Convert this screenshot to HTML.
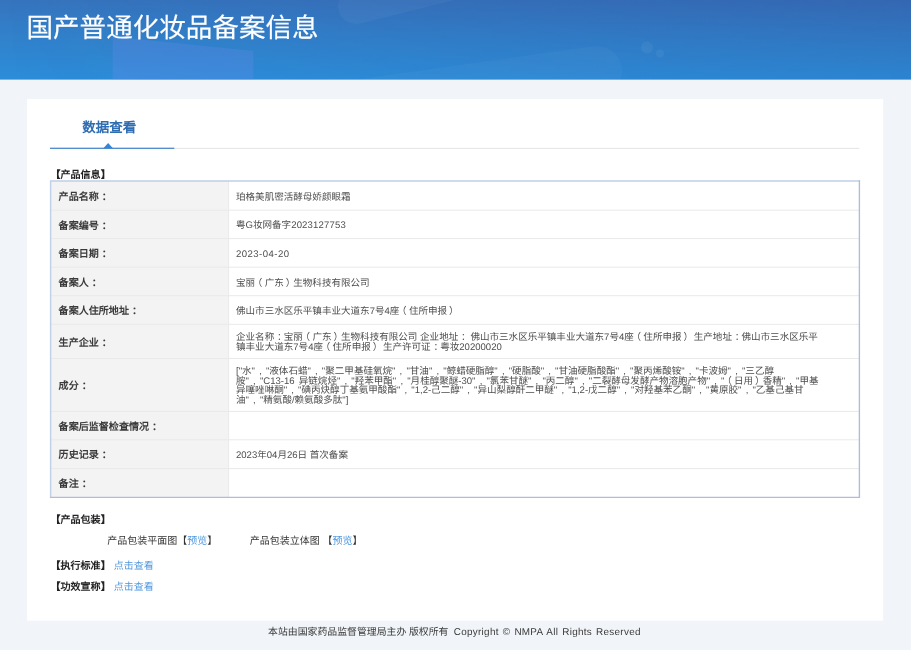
<!DOCTYPE html>
<html lang="zh-CN">
<head>
<meta charset="utf-8">
<title>国产普通化妆品备案信息</title>
<style>
html,body{margin:0;padding:0;}
body{width:911px;height:650px;overflow:hidden;background:#f1f4f8;position:relative;
  font-family:"Liberation Sans",sans-serif;color:#333;text-rendering:geometricPrecision;}
#bg{position:absolute;left:0;top:0;width:911px;height:650px;display:block;}
#tx{position:absolute;left:0;top:0;width:911px;height:650px;will-change:transform;}
.t{position:absolute;white-space:nowrap;line-height:1;margin:0;padding:0;}
.title{left:26.5px;top:15px;font-size:26.55px;color:#fff;line-height:27px;-webkit-text-stroke:0.15px #fff;}
.tab{left:82.3px;top:120.5px;font-size:13.5px;font-weight:bold;color:#2f6db3;line-height:14px;}
.sec{font-size:10.05px;font-weight:bold;color:#222;left:50.4px;line-height:10px;}
.lab{font-size:10.05px;font-weight:bold;color:#3a3a3a;left:58.6px;line-height:10px;}
.val{font-size:9.55px;color:#4d4d4d;left:236px;line-height:9.52px;}

.pk{font-size:10px;color:#333;line-height:10px;}
.foot{font-size:9.9px;color:#3a3a3a;line-height:10px;top:628px;}
.lnk{color:#4f96dc;}
.c{position:relative;left:0.3em;}
.pl{position:relative;left:-0.24em;}
.pr{position:relative;left:0.2em;}
</style>
</head>
<body>
<svg id="bg" width="911" height="650" viewBox="0 0 911 650">
  <defs>
    <linearGradient id="hg" x1="0" y1="0" x2="0" y2="1">
      <stop offset="0" stop-color="#3674be"/>
      <stop offset="0.5" stop-color="#3182cc"/>
      <stop offset="1" stop-color="#2c8dd9"/>
    </linearGradient>
    <linearGradient id="hx" x1="0" y1="0" x2="1" y2="0">
      <stop offset="0" stop-color="#2d3282" stop-opacity="0"/>
      <stop offset="1" stop-color="#2d3282" stop-opacity="1"/>
    </linearGradient>
    <linearGradient id="hm" x1="0" y1="0" x2="0" y2="1">
      <stop offset="0" stop-color="#fff" stop-opacity="0.19"/>
      <stop offset="1" stop-color="#fff" stop-opacity="0.09"/>
    </linearGradient>
    <mask id="mk" maskUnits="userSpaceOnUse" x="0" y="0" width="911" height="80"><rect x="0" y="0" width="911" height="80" fill="url(#hm)"/></mask>
    <clipPath id="hc"><rect x="0" y="0" width="911" height="79.6"/></clipPath>
  </defs>
  <!-- header -->
  <rect x="0" y="0" width="911" height="79.6" fill="url(#hg)"/>
  <g clip-path="url(#hc)">
  <rect x="0" y="0" width="911" height="80" fill="url(#hx)" mask="url(#mk)"/>
  <polygon points="112.6,80 112.6,36.5 253.4,51 253.4,80" fill="#7a8cf0" fill-opacity="0.22"/>
  <rect x="338" y="-12" width="320" height="36" rx="18" transform="rotate(-14 356 6)" fill="#ffffff" fill-opacity="0.04"/>
  <rect x="280" y="46" width="342" height="50" rx="25" transform="rotate(-8 597 71)" fill="#ffffff" fill-opacity="0.03"/>
  <circle cx="647" cy="47.5" r="6" fill="#ffffff" fill-opacity="0.05"/>
  <circle cx="660" cy="53.5" r="4" fill="#ffffff" fill-opacity="0.05"/>
  </g>
  <!-- card -->
  <rect x="27" y="99" width="856.2" height="521.6" fill="#ffffff"/>
  <!-- tab line -->
  <rect x="50" y="147.9" width="809.4" height="0.9" fill="#dfe1e4"/>
  <rect x="50" y="147.7" width="124.3" height="1.15" fill="#3a7fc8"/>
  <path d="M103.4 148.2 L108.15 143.1 L112.9 148.2 Z" fill="#3286d8"/>
  <!-- table -->
  <rect x="50.6" y="181" width="178" height="316.4" fill="#f3f3f3"/>
  <g stroke="#e9e9e9" stroke-width="1" fill="none">
    <path d="M50.6 210.2H859.4M50.6 238.6H859.4M50.6 267.2H859.4M50.6 295.7H859.4M50.6 324.3H859.4M50.6 358.5H859.4M50.6 411.4H859.4M50.6 439.8H859.4M50.6 468.6H859.4"/>
    <path d="M228.6 181V497.4"/>
  </g>
  <path d="M50.6 498.1V181H860.1" fill="none" stroke="#bfd0e8" stroke-width="1.4"/>
  <path d="M859.4 180.3V497.4H49.9" fill="none" stroke="#aebed6" stroke-width="1.4"/>
</svg>

<div id="tx">
<div class="t title">国产普通化妆品备案信息</div>
<div class="t tab">数据查看</div>

<div class="t sec" style="top:171px;">【产品信息】</div>

<div class="t lab" style="top:193px;">产品名称<span class="c">：</span></div>
<div class="t lab" style="top:222px;">备案编号<span class="c">：</span></div>
<div class="t lab" style="top:250px;">备案日期<span class="c">：</span></div>
<div class="t lab" style="top:279px;">备案人<span class="c">：</span></div>
<div class="t lab" style="top:307px;">备案人住所地址<span class="c">：</span></div>
<div class="t lab" style="top:339px;">生产企业<span class="c">：</span></div>
<div class="t lab" style="top:382px;">成分<span class="c">：</span></div>
<div class="t lab" style="top:423px;">备案后监督检查情况<span class="c">：</span></div>
<div class="t lab" style="top:451px;">历史记录<span class="c">：</span></div>
<div class="t lab" style="top:480px;">备注<span class="c">：</span></div>

<div class="t val" style="top:193px;">珀格美肌密活酵母娇颜眼霜</div>
<div class="t val" style="top:221px;">粤G妆网备字<span style="letter-spacing:0.16px">2023127753</span></div>
<div class="t val" style="top:250px;letter-spacing:0.46px;">2023-04-20</div>
<div class="t val" style="top:279px;">宝丽<span class="pl">（</span>广东<span class="pr">）</span>生物科技有限公司</div>
<div class="t val" style="top:307px;">佛山市三水区乐平镇丰业大道东7号4座<span class="pl">（</span>住所申报<span class="pr">）</span></div>
<div class="t val" style="top:333px;">企业名称<span class="c">：</span>宝丽<span class="pl">（</span>广东<span class="pr">）</span>生物科技有限公司 企业地址<span class="c">：</span> 佛山市三水区乐平镇丰业大道东7号4座<span class="pl">（</span>住所申报<span class="pr">）</span> 生产地址<span class="c">：</span>佛山市三水区乐平<br>镇丰业大道东7号4座<span class="pl">（</span>住所申报<span class="pr">）</span> 生产许可证<span class="c">：</span>粤妆20200020</div>
<div class="t val" style="top:367px;word-spacing:1.5px;">["水" , "液体石蜡" , "聚二甲基硅氧烷" , "甘油" , "鲸蜡硬脂醇" , "硬脂酸" , "甘油硬脂酸酯" , "聚丙烯酸铵" , "卡波姆" , "三乙醇<br>胺" , "C13-16 异链烷烃" , "羟苯甲酯" , "月桂醇聚醚-30" , "氯苯甘醚" , "丙二醇" , "二裂酵母发酵产物溶胞产物" , "<span class="pl">（</span>日用<span class="pr">）</span>香精" , "甲基<br>异噻唑啉酮" , "碘丙炔醇丁基氨甲酸酯" , "1,2-己二醇" , "异山梨醇酐二甲醚" , "1,2-戊二醇" , "对羟基苯乙酮" , "黄原胶" , "乙基己基甘<br>油" , "精氨酸/赖氨酸多肽"]</div>
<div class="t val" style="top:451px;">2023年04月26日 首次备案</div>

<div class="t sec" style="top:516px;">【产品包装】</div>
<div class="t pk" style="left:107.2px;top:537px;">产品包装平面图【<span class="lnk">预览</span>】</div>
<div class="t pk" style="left:249.8px;top:537px;">产品包装立体图 【<span class="lnk">预览</span>】</div>
<div class="t sec" style="top:562px;">【执行标准】</div>
<div class="t pk lnk" style="left:113.8px;top:562px;">点击查看</div>
<div class="t sec" style="top:583px;">【功效宣称】</div>
<div class="t pk lnk" style="left:113.8px;top:583px;">点击查看</div>

<div class="t foot" style="left:268px;">本站由国家药品监督管理局主办 版权所有 <span id="cp" style="letter-spacing:0.3px;word-spacing:1px;margin-left:2.5px;">Copyright © NMPA All Rights Reserved</span></div>
</div>
</body>
</html>
